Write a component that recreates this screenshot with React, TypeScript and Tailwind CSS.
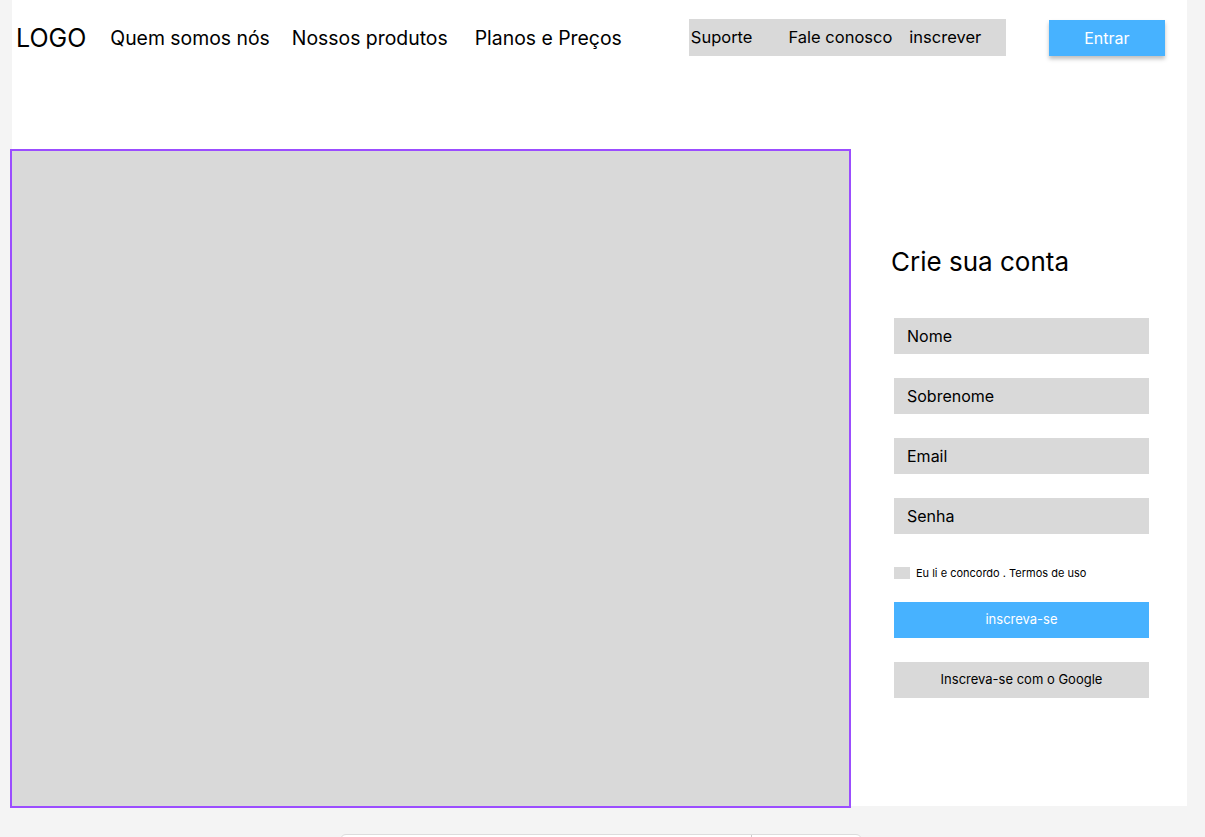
import React from "react";

export default function App() {
  const font = { fontFamily: "Inter, 'Noto Sans', sans-serif" };
  return (
    <div className="w-[1205px] h-[837px] bg-[#f4f4f4] overflow-hidden relative" style={font}>
      <div className="ml-[12px] w-[1175px] h-[806px] bg-white flex flex-col">
        {/* Header */}
        <div className="h-[76px] shrink-0 flex items-center text-black">
          <div className="ml-[4px] text-[25px] leading-none">LOGO</div>
          <div className="ml-[24px] text-[19.4px] leading-none mt-[1px]">Quem somos nós</div>
          <div className="ml-[22px] text-[19.4px] leading-none mt-[1px]">Nossos produtos</div>
          <div className="ml-[27px] text-[19.4px] leading-none mt-[1px]">Planos e Preços</div>
          <div className="ml-[67px] w-[317px] h-[37px] bg-[#d9d9d9] flex items-center text-[16.5px] leading-none -mt-[1px]">
            <span className="ml-[2px]">Suporte</span>
            <span className="ml-[36px]">Fale conosco</span>
            <span className="ml-[17px]">inscrever</span>
          </div>
          <button className="ml-[43px] w-[116px] h-[36px] bg-[#47b2ff] text-white text-[16px] shadow-[0_3px_4px_rgba(0,0,0,0.25)]">
            Entrar
          </button>
        </div>
        {/* Main */}
        <div className="flex shrink-0 mt-[73px]">
          <div className="-ml-[2px] w-[841px] h-[659px] bg-[#d9d9d9] border-2 border-[#9b4dff] shrink-0" />
          <div className="ml-[40px] flex flex-col">
            <div className="mt-[100px] text-[26px] leading-none text-black">Crie sua conta</div>
            <div className="ml-[3px] mt-[43px] flex flex-col gap-[24px]">
              {["Nome", "Sobrenome", "Email", "Senha"].map((t) => (
                <div key={t} className="w-[255px] h-[36px] bg-[#d9d9d9] flex items-center pl-[13px] text-[16px] text-black">
                  {t}
                </div>
              ))}
            </div>
            <div className="ml-[3px] mt-[33px] flex items-center">
              <div className="w-[16px] h-[12px] bg-[#d9d9d9]" />
              <span className="ml-[6px] text-[11px] text-black leading-none">Eu li e concordo . Termos de uso</span>
            </div>
            <button className="ml-[3px] mt-[23px] w-[255px] h-[36px] bg-[#47b2ff] text-white text-[13px]">inscreva-se</button>
            <button className="ml-[3px] mt-[24px] w-[255px] h-[36px] bg-[#d9d9d9] text-black text-[13px]">Inscreva-se com o Google</button>
          </div>
        </div>
      </div>
      <div className="absolute left-[340px] top-[834px] w-[522px] h-[20px] bg-white border border-[#dcdcdc] rounded-t-[6px]">
        <div className="absolute left-[410px] top-0 w-px h-[4px] bg-[#ccc]" />
      </div>
    </div>
  );
}
